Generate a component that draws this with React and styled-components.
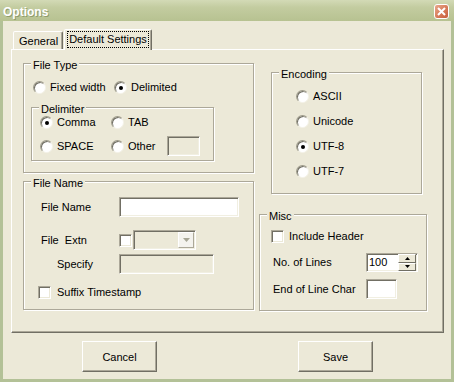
import React from 'react'
import styled, { createGlobalStyle } from 'styled-components'

const GlobalStyle = createGlobalStyle`
  html, body { margin: 0; padding: 0; background: #ece9d8; }
  body {
    font-family: "Liberation Sans", Arial, sans-serif;
    font-size: 11px;
    color: #000;
  }
`

const Window = styled.div`
  width: 454px;
  height: 382px;
  display: flex;
  flex-direction: column;
  overflow: hidden;
`

const TitleBar = styled.div`
  height: 21px;
  flex: none;
  display: flex;
  align-items: center;
  justify-content: space-between;
  padding: 0 5px 0 3px;
  background: linear-gradient(#d3dab6 0%, #c3cca0 35%, #b7c291 100%);
`

const Title = styled.span`
  color: #fff;
  font-weight: bold;
  font-size: 12px;
  text-shadow: 1px 1px 0 #8f9c6c;
  margin-top: 2px;
`

const CloseBox = styled.div`
  width: 15px;
  height: 15px;
  box-sizing: border-box;
  border: 1px solid #fff;
  border-radius: 3px;
  background: linear-gradient(135deg, #e8a88c 0%, #d77a58 55%, #c8603f 100%);
  display: flex;
  align-items: center;
  justify-content: center;
  margin-top: 1px;
`

const Body = styled.div`
  flex: 1;
  display: flex;
  flex-direction: column;
  background: #ece9d8;
  border: 3px solid #b3c197;
  border-top: none;
  padding: 8px 7px 0 8px;
`

const TabStrip = styled.div`
  height: 20px;
  display: flex;
  align-items: flex-end;
  padding-left: 2px;
  position: relative;
  z-index: 1;
`

const Tab = styled.div`
  box-sizing: border-box;
  height: ${p => (p.$active ? 21 : 18)}px;
  margin-bottom: ${p => (p.$active ? -1 : 0)}px;
  margin-left: ${p => (p.$active ? 1 : 0)}px;
  padding: ${p => (p.$active ? '2px 3px 0 3px' : '3px 4px 0 5px')};
  background: #ece9d8;
  border: 1px solid;
  border-bottom: none;
  border-color: #fff #716f64 transparent #fff;
  border-radius: 2px 2px 0 0;
  box-shadow: inset -1px 0 0 #aca899;
  line-height: 13px;
`

const Focus = styled.span`
  display: inline-block;
  outline: 1px dotted #000;
  outline-offset: 0;
  padding: 1px;
  line-height: 13px;
`

const Panel = styled.div`
  box-sizing: border-box;
  width: 433px;
  height: 284px;
  flex: none;
  display: flex;
  border: 1px solid;
  border-color: #fff #716f64 #716f64 #fff;
  box-shadow: inset -1px -1px 0 #aca899;
  padding-left: 11px;
`

const Column = styled.div`
  display: flex;
  flex-direction: column;
  width: ${p => p.$w}px;
  margin-left: ${p => p.$ml || 0}px;
`

const Group = styled.div`
  box-sizing: border-box;
  width: ${p => p.$w}px;
  height: ${p => p.$h}px;
  margin-top: ${p => p.$mt || 0}px;
  margin-left: ${p => p.$ml || 0}px;
  padding-left: ${p => p.$pl || 0}px;
  display: flex;
  flex-direction: column;
  border: 1px solid #aca899;
  box-shadow: inset 1px 1px 0 #fff, 1px 1px 0 #fff;
`

const Caption = styled.div`
  align-self: flex-start;
  margin: -5px 0 0 ${p => p.$ml}px;
  padding: 0 2px;
  background: #ece9d8;
  line-height: 13px;
  height: 13px;
`

const Row = styled.div`
  display: flex;
  align-items: center;
  height: ${p => p.$h || 13}px;
  margin-top: ${p => p.$mt || 0}px;
  margin-left: ${p => p.$ml || 0}px;
`

const Option = styled.label`
  display: inline-flex;
  align-items: center;
  gap: ${p => p.$gap || 4}px;
  width: ${p => (p.$w ? `${p.$w}px` : 'auto')};
  flex: none;
  line-height: 13px;
`

const RadioMark = styled.span`
  width: 13px;
  height: 13px;
  flex: none;
  box-sizing: border-box;
  border-radius: 50%;
  background: #fff;
  border: 1px solid;
  border-color: #9d9a89 #f4f2e8 #f4f2e8 #9d9a89;
  box-shadow: inset 1px 1px 0 #716f64;
  display: flex;
  align-items: center;
  justify-content: center;
  &::after {
    content: '';
    width: 4px;
    height: 4px;
    border-radius: 50%;
    margin: 1px 0 0 1px;
    background: ${p => (p.$on ? '#000' : 'transparent')};
  }
`

const CheckMark = styled.span`
  width: 13px;
  height: 13px;
  flex: none;
  box-sizing: border-box;
  background: #fff;
  border: 1px solid;
  border-color: #aca899 #fff #fff #aca899;
  box-shadow: inset 1px 1px 0 #716f64, inset -1px -1px 0 #ece9d8;
`

const Label = styled.span`
  width: ${p => p.$w}px;
  padding-left: ${p => p.$pl || 0}px;
  box-sizing: border-box;
  flex: none;
  white-space: pre;
  line-height: 13px;
`

const Field = styled.div`
  box-sizing: border-box;
  width: ${p => p.$w}px;
  height: ${p => p.$h || 20}px;
  margin-left: ${p => p.$ml || 0}px;
  flex: none;
  color: #000;
  background: ${p => (p.$off ? '#ece9d8' : '#fff')};
  border: 1px solid;
  border-color: #aca899 #fff #fff #aca899;
  box-shadow: inset 1px 1px 0 #716f64, inset -1px -1px 0 #f1efe2;
  display: flex;
  align-items: center;
  padding: 0 ${p => p.$pr || 0}px 0 2px;
  line-height: 13px;
`

const DropButton = styled.div`
  margin-left: auto;
  width: 16px;
  height: 16px;
  box-sizing: border-box;
  background: #f4f3ee;
  border: 1px solid;
  border-color: #fff #aca899 #aca899 #fff;
  display: flex;
  align-items: center;
  justify-content: center;
`

const SpinBox = styled.div`
  margin-left: auto;
  width: 18px;
  height: 17px;
  display: flex;
  flex-direction: column;
`

const SpinButton = styled.div`
  flex: 1;
  box-sizing: border-box;
  background: #ece9d8;
  border: 1px solid;
  border-color: #fff #716f64 #716f64 #fff;
  display: flex;
  align-items: center;
  justify-content: center;
`

const ButtonRow = styled.div`
  display: flex;
  margin-top: 8px;
  padding-left: 71px;
  gap: 141px;
`

const PushButton = styled.button`
  width: 75px;
  height: 31px;
  box-sizing: border-box;
  background: #ece9d8;
  border: 1px solid;
  border-color: #fff #716f64 #716f64 #fff;
  box-shadow: inset -1px -1px 0 #aca899;
  font-family: inherit;
  font-size: 11px;
  color: #000;
  padding: 0;
`

const Arrow = ({ size = 7, color = '#000', up }) => {
  const h = Math.ceil(size / 2)
  const pts = up ? `0,${h} ${size},${h} ${size / 2},0` : `0,0 ${size},0 ${size / 2},${h}`
  return (
    <svg width={size} height={h} viewBox={`0 0 ${size} ${h}`}>
      <polygon points={pts} fill={color} />
    </svg>
  )
}

const Radio = ({ on, w, children }) => (
  <Option $w={w}>
    <RadioMark $on={on} />
    {children}
  </Option>
)

const Options = () => (
  <>
    <GlobalStyle />
    <Window>
      <TitleBar>
        <Title>Options</Title>
        <CloseBox>
          <svg width="9" height="9" viewBox="0 0 9 9">
            <path d="M1 1 L8 8 M8 1 L1 8" stroke="#fff" strokeWidth="2" />
          </svg>
        </CloseBox>
      </TitleBar>
      <Body>
        <TabStrip>
          <Tab>General</Tab>
          <Tab $active>
            <Focus>Default Settings</Focus>
          </Tab>
        </TabStrip>
        <Panel>
          <Column $w={231}>
            <Group $w={231} $h={110} $mt={13} $pl={9}>
              <Caption $ml={-2}>File Type</Caption>
              <Row $mt={9}>
                <Radio w={81}>Fixed width</Radio>
                <Radio on>Delimited</Radio>
              </Row>
              <Group $w={183} $h={54} $mt={13} $ml={-2} $pl={8}>
                <Caption $ml={-1}>Delimiter</Caption>
                <Row>
                  <Radio on w={71}>Comma</Radio>
                  <Radio>TAB</Radio>
                </Row>
                <Row $h={20} $mt={7}>
                  <Radio w={71}>SPACE</Radio>
                  <Radio w={56}>Other</Radio>
                  <Field $w={33} $off />
                </Row>
              </Group>
            </Group>
            <Group $w={231} $h={129} $mt={8} $pl={17}>
              <Caption $ml={-10}>File Name</Caption>
              <Row $h={20} $mt={7}>
                <Label $w={78}>File Name</Label>
                <Field $w={120} />
              </Row>
              <Row $h={20} $mt={13}>
                <Label $w={78}>File  Extn</Label>
                <CheckMark />
                <Field $w={63} $ml={1} $off $pr={1}>
                  <DropButton>
                    <Arrow size={7} color="#a7a695" />
                  </DropButton>
                </Field>
              </Row>
              <Row $h={20} $mt={4}>
                <Label $w={78} $pl={16}>Specify</Label>
                <Field $w={95} $off />
              </Row>
              <Row $mt={12} $ml={-3}>
                <Option $gap={6}>
                  <CheckMark />
                  Suffix Timestamp
                </Option>
              </Row>
            </Group>
          </Column>
          <Column $w={168} $ml={5}>
            <Group $w={151} $h={122} $mt={22} $ml={12} $pl={24}>
              <Caption $ml={-17}>Encoding</Caption>
              <Row $mt={9}><Radio>ASCII</Radio></Row>
              <Row $mt={12}><Radio>Unicode</Radio></Row>
              <Row $mt={12}><Radio on>UTF-8</Radio></Row>
              <Row $mt={12}><Radio>UTF-7</Radio></Row>
            </Group>
            <Group $w={168} $h={97} $mt={20} $pl={11}>
              <Caption $ml={-4}>Misc</Caption>
              <Row $mt={7}>
                <Option $gap={5}>
                  <CheckMark />
                  Include Header
                </Option>
              </Row>
              <Row $h={19} $mt={10} $ml={2}>
                <Label $w={93}>No. of Lines</Label>
                <Field $w={52} $h={19} $pr={1}>
                  <span>100</span>
                  <SpinBox>
                    <SpinButton><Arrow size={5} up /></SpinButton>
                    <SpinButton><Arrow size={5} /></SpinButton>
                  </SpinBox>
                </Field>
              </Row>
              <Row $h={20} $mt={7} $ml={2}>
                <Label $w={93}>End of Line Char</Label>
                <Field $w={31} />
              </Row>
            </Group>
          </Column>
        </Panel>
        <ButtonRow>
          <PushButton>Cancel</PushButton>
          <PushButton>Save</PushButton>
        </ButtonRow>
      </Body>
    </Window>
  </>
)

export default Options
